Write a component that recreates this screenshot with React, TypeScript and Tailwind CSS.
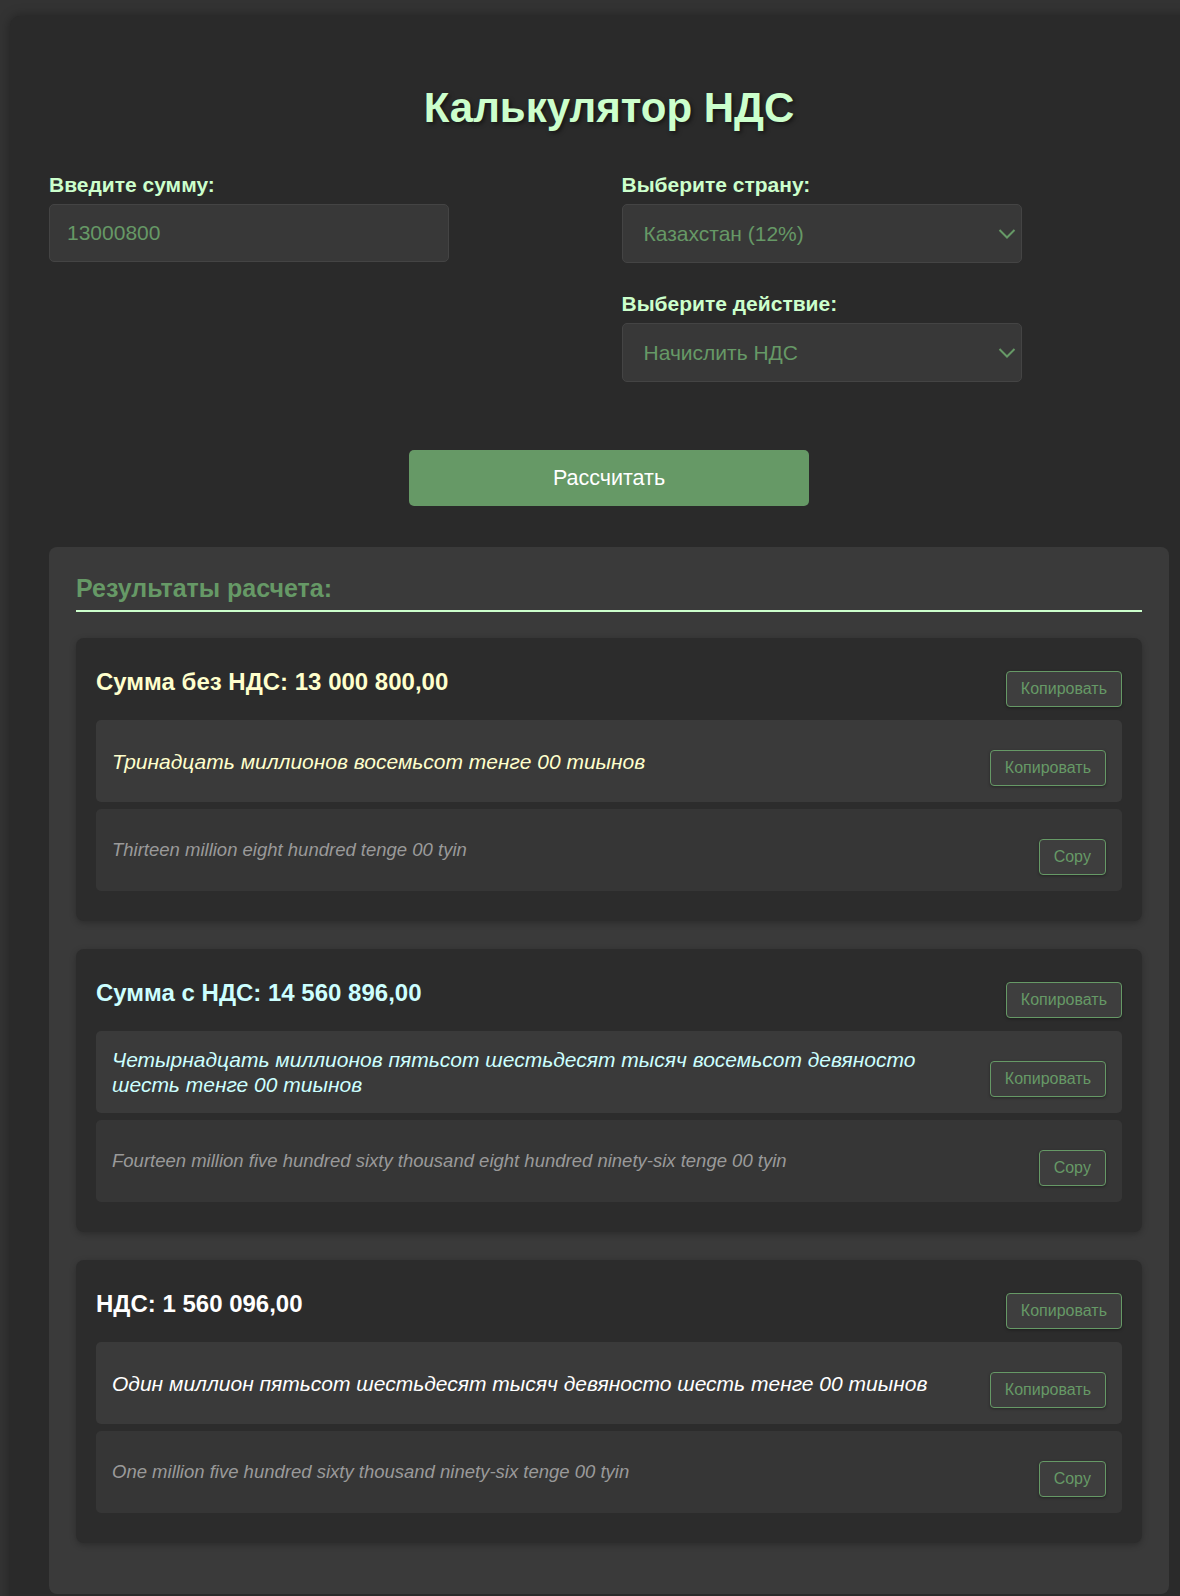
import { useState } from "react";

interface ResultData {
    title: string;
    color: string;
    ru: string;
    en: string;
}

const results: ResultData[] = [
    {
        title: "Сумма без НДС: 13 000 800,00",
        color: "text-[#ffffcc]",
        ru: "Тринадцать миллионов восемьсот тенге 00 тиынов",
        en: "Thirteen million eight hundred tenge 00 tyin",
    },
    {
        title: "Сумма с НДС: 14 560 896,00",
        color: "text-[#ccffff]",
        ru: "Четырнадцать миллионов пятьсот шестьдесят тысяч восемьсот девяносто шесть тенге 00 тиынов",
        en: "Fourteen million five hundred sixty thousand eight hundred ninety-six tenge 00 tyin",
    },
    {
        title: "НДС: 1 560 096,00",
        color: "text-white",
        ru: "Один миллион пятьсот шестьдесят тысяч девяносто шесть тенге 00 тиынов",
        en: "One million five hundred sixty thousand ninety-six tenge 00 tyin",
    },
];

function CopyButton({ label }: { label: string }) {
    return (
        <button className="mt-[14px] ml-[10px] shrink-0 rounded-[4px] border border-[#669966] bg-[#3e3e3e] px-[14px] py-[8px] text-[16px] leading-[18px] text-[#669966] shadow-[0_1px_3px_rgba(0,0,0,0.35)]">
            {label}
        </button>
    );
}

function Chevron() {
    return (
        <svg
            className="pointer-events-none absolute right-[6px] top-1/2 -translate-y-1/2"
            width="18"
            height="11"
            viewBox="0 0 18 11"
            fill="none"
        >
            <path d="M1.5 1.5L9 9L16.5 1.5" stroke="#669966" strokeWidth="2" />
        </svg>
    );
}

function ResultCard({ data }: { data: ResultData }) {
    return (
        <div className="rounded-[8px] bg-[#2c2c2c] px-5 pt-[19px] pb-[30px] shadow-[0_2px_6px_rgba(0,0,0,0.25)]">
            <div className="mb-[13px] flex items-center justify-between">
                <h4 className={`text-[24px] font-bold leading-[28px] ${data.color}`}>
                    {data.title}
                </h4>
                <CopyButton label="Копировать" />
            </div>

            <div className="flex flex-col gap-[7px]">
                <div className="flex items-center justify-between rounded-[5px] bg-[#3a3a3a] p-4">
                    <p className={`flex-1 text-[21px] italic leading-[25px] ${data.color}`}>
                        {data.ru}
                    </p>
                    <CopyButton label="Копировать" />
                </div>

                <div className="flex items-center justify-between rounded-[5px] bg-[#363636] p-4">
                    <p className="flex-1 text-[18.5px] italic leading-[22px] text-[#9a9a9a]">
                        {data.en}
                    </p>
                    <CopyButton label="Copy" />
                </div>
            </div>
        </div>
    );
}

function App() {
    const [amount, setAmount] = useState("13000800");
    const [country, setCountry] = useState("kz");
    const [action, setAction] = useState("add");

    return (
        <div className="min-h-screen overflow-hidden bg-[#333333] pt-[16px] pl-[10px] font-['Liberation_Sans',Arial,sans-serif]">
            <div className="w-[1198px] rounded-[10px] bg-[#2a2a2a] px-[39px] pt-[68px] pb-[60px] shadow-[0_0_12px_rgba(0,0,0,0.35)]">

                {/* Title */}

                <h1 className="text-center text-[42px] font-bold leading-[48px] text-[#ccffcc] [text-shadow:2px_2px_4px_rgba(0,0,0,0.5)]">
                    Калькулятор НДС
                </h1>

                {/* Form */}

                <div className="mt-[41px] grid grid-cols-2 gap-x-[25px]">
                    <div>
                        <label className="mb-[7px] block text-[21px] font-bold leading-[24px] text-[#ccffcc]">
                            Введите сумму:
                        </label>
                        <input
                            value={amount}
                            onChange={(e) => setAmount(e.target.value)}
                            className="h-[58px] w-[400px] rounded-[5px] border border-[#444444] bg-[#383838] px-[17px] text-[21px] text-[#669966] outline-none"
                        />
                    </div>

                    <div className="flex flex-col gap-[29px]">
                        <div>
                            <label className="mb-[7px] block text-[21px] font-bold leading-[24px] text-[#ccffcc]">
                                Выберите страну:
                            </label>
                            <div className="relative w-[400px]">
                                <select
                                    value={country}
                                    onChange={(e) => setCountry(e.target.value)}
                                    className="h-[59px] w-full appearance-none rounded-[5px] border border-[#444444] bg-[#383838] px-[21px] text-[21px] text-[#669966] outline-none"
                                >
                                    <option value="kz">Казахстан (12%)</option>
                                    <option value="ru">Россия (20%)</option>
                                </select>
                                <Chevron />
                            </div>
                        </div>

                        <div>
                            <label className="mb-[7px] block text-[21px] font-bold leading-[24px] text-[#ccffcc]">
                                Выберите действие:
                            </label>
                            <div className="relative w-[400px]">
                                <select
                                    value={action}
                                    onChange={(e) => setAction(e.target.value)}
                                    className="h-[59px] w-full appearance-none rounded-[5px] border border-[#444444] bg-[#383838] px-[21px] text-[21px] text-[#669966] outline-none"
                                >
                                    <option value="add">Начислить НДС</option>
                                    <option value="sub">Выделить НДС</option>
                                </select>
                                <Chevron />
                            </div>
                        </div>
                    </div>
                </div>

                {/* Button */}

                <div className="mt-[68px] flex justify-center">
                    <button className="h-[56px] w-[400px] rounded-[5px] bg-[#669966] text-[21.5px] text-white">
                        Рассчитать
                    </button>
                </div>

                {/* Results */}

                <div className="mt-[41px] rounded-[8px] bg-[#3a3a3a] px-[27px] pt-[27px] pb-[51px]">
                    <h3 className="mb-[26px] border-b-2 border-[#ccffcc] pb-[8px] text-[25px] font-bold leading-[28px] text-[#669966]">
                        Результаты расчета:
                    </h3>

                    <div className="flex flex-col gap-[28px]">
                        {results.map((r) => (
                            <ResultCard key={r.title} data={r} />
                        ))}
                    </div>
                </div>

            </div>
        </div>
    );
}

export default App;
